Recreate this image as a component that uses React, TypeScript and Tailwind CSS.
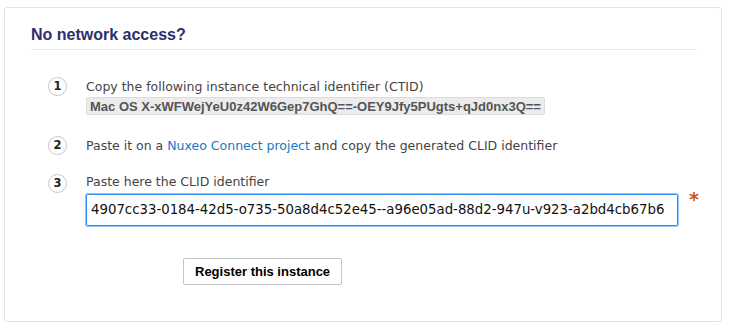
const font = "font-['DejaVu_Sans',sans-serif]";

function StepNum({ n }: { n: number }) {
  return (
    <div className="w-[19px] h-[19px] shrink-0 rounded-full border border-[#c8c8c8] bg-white flex items-center justify-center text-[11.5px] font-bold text-[#222] leading-none">
      {n}
    </div>
  );
}

export default function App() {
  return (
    <div className={`w-[729px] h-[328px] bg-white pt-[7px] pl-[4px] ${font}`}>
      <div className="w-[718px] h-[315px] border border-[#e3e3e3] rounded-[3px] bg-white">
        {/* Header */}
        <div className="ml-[26px] mr-[24px] pt-[17px]">
          <h2 className="font-['Liberation_Sans',sans-serif] text-[16px] leading-[20px] font-bold text-[#2c2f6b]">No network access?</h2>
          <div className="mt-[4px] border-t border-[#e6e6e6]" />
        </div>

        {/* Steps */}
        <div className="pl-[43px] pt-[27px] text-[12.5px] text-[#444]">
          <div className="flex items-start gap-[19px]">
            <StepNum n={1} />
            <div>
              <p className="leading-[19px]">Copy the following instance technical identifier (CTID)</p>
              <code className="inline-block mt-[1px] px-[3px] h-[18px] leading-[17px] bg-[#ececec] border border-[#dcdcdc] rounded-[2px] font-['Liberation_Sans',sans-serif] font-bold text-[13px] text-[#555]">
                Mac OS X-xWFWejYeU0z42W6Gep7GhQ==-OEY9Jfy5PUgts+qJd0nx3Q==
              </code>
            </div>
          </div>

          <div className="flex items-start gap-[19px] mt-[19px]">
            <StepNum n={2} />
            <p className="leading-[19px]">
              Paste it on a <a className="text-[#1a78c2]">Nuxeo Connect project</a> and copy the generated CLID identifier
            </p>
          </div>

          <div className="flex items-start gap-[19px] mt-[19px]">
            <StepNum n={3} />
            <div>
              <p className="leading-[15px]">Paste here the CLID identifier</p>
              <div className="flex items-start mt-[5px]">
                <input
                  readOnly
                  value="4907cc33-0184-42d5-o735-50a8d4c52e45--a96e05ad-88d2-947u-v923-a2bd4cb67b6"
                  className="w-[592px] h-[32px] px-[4px] border border-[#2f8ff0] rounded-[2px] text-[13.3px] text-[#111] outline-none shadow-[0_0_0_1px_#8cc4fa]"
                />
                <span className="ml-[11px] -mt-[4px] text-[#d2560a] text-[19px] font-bold leading-none">*</span>
              </div>
            </div>
          </div>

          <div className="pl-[135px] mt-[32px]">
            <button className="h-[27px] px-[11px] border border-[#c4c4c4] rounded-[2px] bg-white font-['Liberation_Sans',sans-serif] text-[13px] font-bold text-black">
              Register this instance
            </button>
          </div>
        </div>
      </div>
    </div>
  );
}
